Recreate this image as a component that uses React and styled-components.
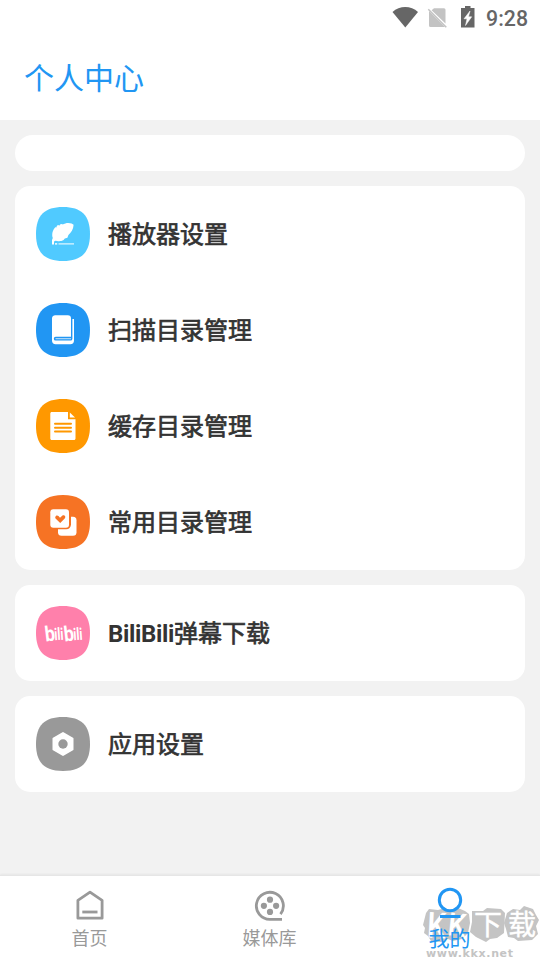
import React, { useState } from 'react';
import styled, { createGlobalStyle } from 'styled-components';

const GlobalStyle = createGlobalStyle`
  * {
    box-sizing: border-box;
  }

  body {
    margin: 0;
    background: #f2f2f2;
    font-family: Roboto, 'Noto Sans CJK SC', sans-serif;
  }
`;

const Screen = styled.div`
  position: relative;
  display: flex;
  flex-direction: column;
  height: 960px;
  width: 540px;
  overflow: hidden;
  background: #f2f2f2;
`;

const StatusBar = styled.div`
  display: flex;
  justify-content: flex-end;
  height: 36px;
  padding-right: 12px;
  background: #fff;
`;

const Clock = styled.span`
  width: 42px;
  margin-left: 10px;
  font-size: 21.3px;
  font-weight: 500;
  line-height: 38px;
  color: #666;
  text-align: right;
  white-space: nowrap;
`;

const Header = styled.header`
  display: flex;
  align-items: center;
  height: 84px;
  padding: 2px 0 0 24px;
  background: #fff;
`;

const Title = styled.h1`
  margin: 0;
  font-size: 30px;
  font-weight: 400;
  line-height: 44px;
  color: #2196f3;
`;

const Content = styled.main`
  display: flex;
  flex: 1;
  flex-direction: column;
  gap: 15px;
  padding: 15px;
`;

const Card = styled.section`
  min-height: 36px;
  border-radius: ${(props) => props.$radius || '15px'};
  background: #fff;
`;

const Row = styled.div`
  display: flex;
  align-items: center;
  height: 96px;
  padding-left: 21px;
  cursor: pointer;
`;

const RowLabel = styled.span`
  margin-left: 18px;
  padding-top: 2px;
  font-size: 24px;
  font-weight: 400;
  line-height: 36px;
  color: #333;
  -webkit-text-stroke: 0.7px #333;
`;

const Latin = styled.span`
  font-weight: 700;
  letter-spacing: -0.35px;
  -webkit-text-stroke: 0;
`;

const LogoText = styled.text`
  font-family: Roboto, sans-serif;
  font-weight: 700;
`;

const TabBar = styled.nav`
  display: flex;
  height: 85px;
  border-top: 1px solid #e6e6e6;
  background: #fff;
  box-shadow: 0 -1px 2px rgba(0, 0, 0, 0.05);
`;

const Tab = styled.button`
  position: relative;
  z-index: 2;
  display: flex;
  flex: 1;
  flex-direction: column;
  align-items: center;
  padding: 10px 0 0;
  border: none;
  background: none;
  font-family: inherit;
  color: ${(props) => (props.$active ? '#2196f3' : '#999')};
  cursor: pointer;
`;

const TabLabel = styled.span`
  margin-top: ${(props) => (props.$active ? '4px' : '3px')};
  padding-right: 1px;
  font-size: ${(props) => (props.$active ? '21px' : '18px')};
  line-height: 27px;
`;

const Watermark = styled.svg`
  position: absolute;
  right: 0;
  bottom: 0;
  z-index: 1;
  pointer-events: none;
`;

const SQUIRCLE = 'M0 27C0 8.500 8.500 0 27 0S54 8.500 54 27 45.500 54 27 54 0 45.500 0 27Z';

function Badge({ color, children }) {
  return (
    <svg width="54" height="54" viewBox="0 0 54 54" fill="#fff">
      <path d={SQUIRCLE} fill={color} />
      {children}
    </svg>
  );
}

function FeatherIcon() {
  return (
    <Badge color="#50caff">
      <path d="M16 37.500V33l.8-2C15.500 27.500 16.500 23 19.500 20l.6.7 1-2.200 1.400-.4.6.7 1.300-1.600 1.700-.2.5.6c2.700-2 6.500-2 9-1.200l2 1.400c-.2 4.500-2.500 7.800-5.200 10.200l-1 2.800-2.600.8-1.200 1.400c-2 1.200-4.500 1.400-6.500 1l-1.600-.3-1.500.8V37.500Z" />
      <path d="M19 36h2.200v1.700H19z" opacity=".8" />
      <path d="M22.500 36H38v1.700H22.500z" opacity=".6" />
    </Badge>
  );
}

function BookIcon() {
  return (
    <Badge color="#2196f3">
      <path d="M19.500 12.300h12.300a3.200 3.200 0 0 1 3.200 3.200v18.300H19.700a1.900 1.900 0 0 0 0 3.800h14.800a1.900 1.900 0 0 0 1.900-1.900V16h1.600v21.500a3.700 3.700 0 0 1-3.700 3.700H19.700a3.700 3.700 0 0 1-3.700-3.700v-22a3.200 3.200 0 0 1 3.500-3.200Z" />
      <path d="M19.500 35H35v1.300H19.500z" opacity=".6" />
    </Badge>
  );
}

function DocumentIcon() {
  return (
    <Badge color="#ff9800">
      <path d="M15.800 13H32v7.200h7.500v19.300c0 .9-.6 1.500-1.500 1.500H15.800c-.9 0-1.500-.6-1.500-1.500v-25c0-.9.600-1.500 1.500-1.500Z" />
      <path d="M33.800 13.500 39 18.600h-5.200z" />
      <path d="M19 24.700h16M19 28.700h16M19 32.500h16" stroke="#ff9800" strokeWidth="2" strokeLinecap="round" />
    </Badge>
  );
}

function FavoriteIcon() {
  return (
    <Badge color="#f67324">
      <rect x="22" y="21.700" width="18.500" height="19" rx="3.500" />
      <path d="M20 20h15v9.500a4.800 4.800 0 0 1-4.800 4.800H20z" fill="#f67324" />
      <rect x="14.300" y="14.300" width="18.700" height="18.500" rx="3" />
      <path d="m24.200 28-4.400-4.200c-1.600-1.700.7-4.500 2.700-2.700l1.500 1.700 2.200-2c2-1.500 4.200 1 2.500 2.700z" fill="#f67324" />
    </Badge>
  );
}

function BiliIcon() {
  return (
    <Badge color="#ff80ab">
      <LogoText x="9" y="35" fontSize="21" textLength="10" lengthAdjust="spacingAndGlyphs" transform="rotate(-7 13 30)">b</LogoText>
      <LogoText x="18.500" y="34" fontSize="17" textLength="9" lengthAdjust="spacingAndGlyphs" transform="rotate(-4 23 30)">ili</LogoText>
      <LogoText x="28" y="35" fontSize="21" textLength="10" lengthAdjust="spacingAndGlyphs" transform="rotate(-7 32 30)">b</LogoText>
      <LogoText x="37.500" y="34" fontSize="17" textLength="9" lengthAdjust="spacingAndGlyphs" transform="rotate(-4 42 30)">ili</LogoText>
    </Badge>
  );
}

function SettingsIcon() {
  return (
    <Badge color="#999">
      <path d="m27 16 9.500 5.500v11L27 38l-9.500-5.500v-11z" stroke="#fff" strokeWidth="2" strokeLinejoin="round" />
      <circle cx="27" cy="27" r="4.700" fill="#999" />
    </Badge>
  );
}

function StatusIcons() {
  return (
    <svg width="84" height="36" viewBox="0 0 84 36">
      <path d="M.5 12c7-6.600 18.500-6.600 25.500 0L13.300 27.500z" fill="#666" />
      <path d="M42 8.300h10a1.500 1.500 0 0 1 1.500 1.500v13.700L39.600 10.300zM37 11v14.500a1.500 1.500 0 0 0 1.500 1.500H53z" fill="#c3c3c3" />
      <path d="m36.300 9.300 18 18" stroke="#c3c3c3" strokeWidth="1.500" />
      <path d="M73 6h5.500v2h4v19.500H69V8h4z" fill="#666" />
      <path d="m78 11-6 7.800h3l-1.500 6.700 6.200-8.700h-3.200z" fill="#fff" stroke="#fff" strokeWidth=".5" />
    </svg>
  );
}

function HomeIcon() {
  return (
    <svg width="36" height="36" viewBox="0 0 36 36" fill="none" stroke="currentColor" strokeWidth="2.800">
      <path d="M5.900 32.200V14.300L18 6.200l12.100 8.100v17.900z" strokeLinejoin="round" />
      <path d="M10.300 26h15.200" />
    </svg>
  );
}

function ReelIcon() {
  return (
    <svg width="36" height="36" viewBox="0 0 36 36" fill="currentColor">
      <path d="M30 33.300H18a13.500 13.500 0 1 1 10.500-5.200" fill="none" stroke="currentColor" strokeWidth="2.800" />
      <circle cx="18" cy="13.700" r="3.100" />
      <circle cx="11.900" cy="19.800" r="3.100" />
      <circle cx="24.100" cy="19.800" r="3.100" />
      <circle cx="18" cy="25.900" r="3.100" />
    </svg>
  );
}

function UserIcon() {
  return (
    <svg width="36" height="36" viewBox="0 0 36 36" fill="none" stroke="currentColor" strokeWidth="3">
      <circle cx="18" cy="14" r="10.700" />
      <path d="M8 30.500h20.500" />
    </svg>
  );
}

const groups = [
  [
    { icon: FeatherIcon, label: '播放器设置' },
    { icon: BookIcon, label: '扫描目录管理' },
    { icon: DocumentIcon, label: '缓存目录管理' },
    { icon: FavoriteIcon, label: '常用目录管理' },
  ],
  [{ icon: BiliIcon, latin: 'BiliBili', label: '弹幕下载' }],
  [{ icon: SettingsIcon, label: '应用设置' }],
];

const tabs = [
  { id: 'home', icon: HomeIcon, label: '首页' },
  { id: 'media', icon: ReelIcon, label: '媒体库' },
  { id: 'mine', icon: UserIcon, label: '我的' },
];

function SiteMark() {
  return (
    <Watermark width="120" height="58" viewBox="0 0 120 58" fontFamily="Roboto, 'Noto Sans CJK SC', sans-serif">
      <g fill="#c4c4c4">
        <path d="m6 11 3-4 9 1 7-2 4 3 9-3 7 3 4 3 1 9-2 10-6 6-9 2-5-2-7 3-10-1-3-5-4-3 1-5-2-3z" />
        <path d="m52 9 11 0 4-3 14 1 4 4-1 20-7 5-7 1-4 3-10-5-6-5 2-10z" />
        <path d="m87 11 6-4 7 1 4-4 9 3 3 6 3 5-3 6 2 8-6 6-14 1-4-3-6-1-2-8-2-6z" />
      </g>
      <g fill="#fff">
        <text x="7" y="36" fontSize="36" fontWeight="500" textLength="19" lengthAdjust="spacingAndGlyphs" transform="rotate(3 16 24)">K</text>
        <text x="28" y="34" fontSize="32" fontWeight="500" textLength="18" lengthAdjust="spacingAndGlyphs" transform="rotate(6 36 24)">K</text>
        <g stroke="#fff" strokeWidth=".4">
          <text x="54" y="33" fontSize="28">下</text>
          <text x="88" y="33" fontSize="28">载</text>
        </g>
      </g>
      <text x="6" y="55" fontSize="11" fontWeight="700" fill="#c4c4c4" fontFamily="'DejaVu Sans', sans-serif" textLength="87" lengthAdjust="spacing">www.kkx.net</text>
    </Watermark>
  );
}

export default function App() {
  const [activeTab, setActiveTab] = useState('mine');

  return (
    <>
      <GlobalStyle />
      <Screen>
        <StatusBar>
          <StatusIcons />
          <Clock>9:28</Clock>
        </StatusBar>
        <Header>
          <Title>个人中心</Title>
        </Header>
        <Content>
          <Card $radius="18px" />
          {groups.map((rows) => (
            <Card key={rows[0].label}>
              {rows.map(({ icon: Icon, label, latin }) => (
                <Row key={label}>
                  <Icon />
                  <RowLabel>
                    {latin && <Latin>{latin}</Latin>}
                    {label}
                  </RowLabel>
                </Row>
              ))}
            </Card>
          ))}
        </Content>
        <TabBar>
          {tabs.map(({ id, icon: Icon, label }) => (
            <Tab key={id} $active={activeTab === id} onClick={() => setActiveTab(id)}>
              <Icon />
              <TabLabel $active={activeTab === id}>{label}</TabLabel>
            </Tab>
          ))}
        </TabBar>
        <SiteMark />
      </Screen>
    </>
  );
}
